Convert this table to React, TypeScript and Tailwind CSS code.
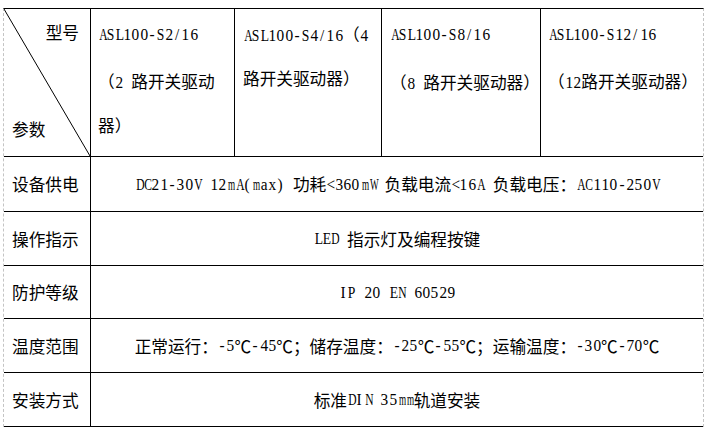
import React from "react";

// half-width cells: squeeze wide serif glyphs so they sit inside 8.33px
function cellScale(c: string) {
  if ("WMm".includes(c)) return "scale-x-[0.54]";
  if ("ADCVNHOw".includes(c)) return "scale-x-[0.68]";
  if ("SPELBRT".includes(c)) return "scale-x-[0.8]";
  return "scale-x-[0.9]";
}

// Mixed text: ASCII as half-width serif cells, CJK as full-width cells
function T({ s }: { s: string }) {
  const parts = s.split(/([\x20-\x7e]+|℃)/).filter((p) => p.length > 0);
  return (
    <>
      {parts.map((p, i) => {
        if (p === "℃") {
          return (
            <span key={i} className="inline-block w-[16.67px] text-center font-['Noto_Sans_CJK_SC',sans-serif]">
              ℃
            </span>
          );
        }
        if (/^[\x20-\x7e]+$/.test(p)) {
          return (
            <span key={i}>
              {p.split("").map((c, j) => (
                <span
                  key={j}
                  className={`inline-block w-[8.33px] text-center text-[17px] font-['Liberation_Serif',serif] ${cellScale(c)}`}
                >
                  {c === " " ? "\u00a0" : c}
                </span>
              ))}
            </span>
          );
        }
        return (
          <span key={i} className="font-['Noto_Sans_CJK_SC',sans-serif]">
            {p}
          </span>
        );
      })}
    </>
  );
}

const rows = [
  { label: "设备供电", value: "DC21-30V 12mA(max) 功耗<360mW 负载电流<16A 负载电压：AC110-250V", h: "h-[55px]" },
  { label: "操作指示", value: "LED 指示灯及编程按键", h: "h-[54px]" },
  { label: "防护等级", value: "IP 20 EN 60529", h: "h-[53px]" },
  { label: "温度范围", value: "正常运行：-5℃-45℃；储存温度：-25℃-55℃；运输温度：-30℃-70℃", h: "h-[54px]" },
  { label: "安装方式", value: "标准DIN 35mm轨道安装", h: "h-[54px]" },
];

export default function App() {
  return (
    <div className="w-[711px] h-[435px] bg-white text-black text-[16.67px] leading-[16px] pt-[8px] pl-[3px]">
      <div className="w-[701px] border-t border-black border-l border-r border-l-[#c4c4c4] border-r-[#c4c4c4] border-dashed [border-top-style:solid]">
        {/* header */}
        <div className="flex h-[148px] border-b border-black">
          <div className="relative w-[87px] shrink-0 border-r border-black flex flex-col">
            <svg className="absolute inset-0 w-full h-full" preserveAspectRatio="none" viewBox="0 0 86 147">
              <line x1="0" y1="0" x2="86" y2="147" stroke="#000" strokeWidth="1" />
            </svg>
            <div className="mt-[15px] pr-[11px] text-right whitespace-nowrap">
              <T s="型号" />
            </div>
            <div className="mt-[80px] pl-[8px] whitespace-nowrap">
              <T s="参数" />
            </div>
          </div>
          <div className="w-[144px] shrink-0 border-r border-black pl-[7px] flex flex-col whitespace-nowrap">
            <div className="mt-[17px]"><T s="ASL100-S2/16" /></div>
            <div className="mt-[30px]"><T s="（2 路开关驱动" /></div>
            <div className="mt-[26px]"><T s="器）" /></div>
          </div>
          <div className="w-[147px] shrink-0 border-r border-black pl-[8px] flex flex-col whitespace-nowrap">
            <div className="mt-[17px]"><T s="ASL100-S4/16（4" /></div>
            <div className="mt-[26px]"><T s="路开关驱动器）" /></div>
          </div>
          <div className="w-[159px] shrink-0 border-r border-black pl-[8px] flex flex-col whitespace-nowrap">
            <div className="mt-[17px]"><T s="ASL100-S8/16" /></div>
            <div className="mt-[31px]"><T s="（8 路开关驱动器）" /></div>
          </div>
          <div className="flex-1 pl-[7px] flex flex-col whitespace-nowrap">
            <div className="mt-[17px]"><T s="ASL100-S12/16" /></div>
            <div className="mt-[30px]"><T s="（12路开关驱动器）" /></div>
          </div>
        </div>
        {/* body */}
        {rows.map((r) => (
          <div key={r.label} className={`flex border-b border-black ${r.h}`}>
            <div className="w-[87px] shrink-0 border-r border-black pl-[8px] flex items-center whitespace-nowrap">
              <T s={r.label} />
            </div>
            <div className="flex-1 flex items-center justify-center whitespace-nowrap">
              <T s={r.value} />
            </div>
          </div>
        ))}
      </div>
    </div>
  );
}
